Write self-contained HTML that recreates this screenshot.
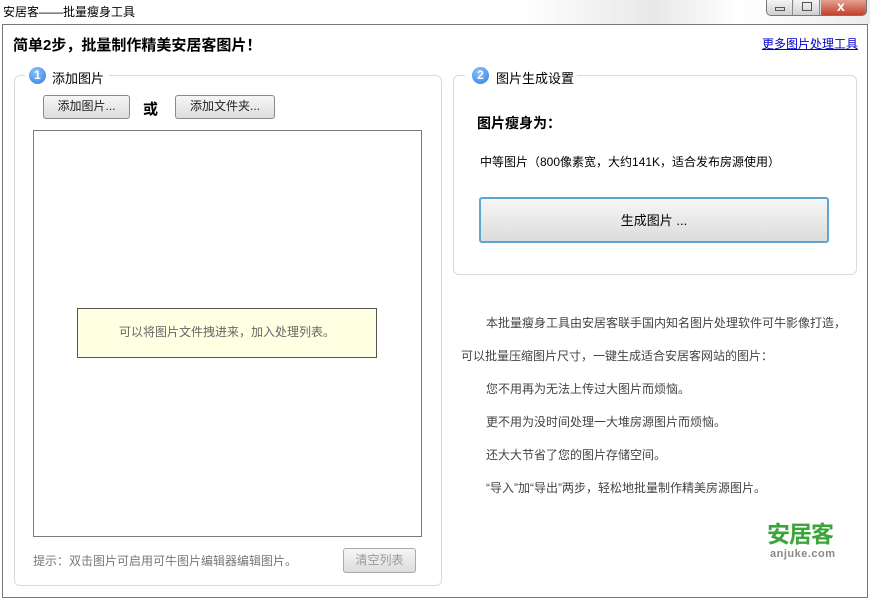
<!DOCTYPE html><html><head><meta charset="utf-8"><style>
*{margin:0;padding:0;box-sizing:border-box}
body{width:870px;height:600px;background:#fff;font-family:"Liberation Sans","Noto Sans CJK SC",sans-serif;font-size:12px;color:#000;position:relative;overflow:hidden}
.a{position:absolute;white-space:nowrap}
.btn{position:absolute;border:1px solid #8a8a8a;border-radius:3px;background:linear-gradient(#f6f6f6,#dcdcdc);text-align:center;font-size:12px;color:#222}
.grp{position:absolute;border:1px solid #dadada;border-radius:6px}
.num{position:absolute;width:17px;height:17px;border-radius:50%;background:radial-gradient(circle at 40% 30%,#8cc4ff,#2d7ce0);color:#fff;font-weight:bold;font-size:12px;text-align:center;line-height:17px}
.p{position:absolute;color:#444;font-size:12px;white-space:nowrap}
</style></head><body>
<div class="a" style="left:0;top:0;width:870px;height:24px;background:linear-gradient(90deg,#fff 60%,#e8e8e8 75%,#fff 85%,#ececec)"></div>
<div class="a" style="left:3px;top:3px;font-size:12px">安居客——批量瘦身工具</div>
<div class="a" style="left:766px;top:0;width:101px;height:16px;border:1px solid #777;border-top:none;border-radius:0 0 5px 5px;overflow:hidden;background:#ddd">
<div class="a" style="left:0;top:0;width:26px;height:15px;background:linear-gradient(#f4f4f4,#cfcfcf);border-right:1px solid #888"></div>
<div class="a" style="left:8px;top:7px;width:10px;height:4px;border:1px solid #555"></div>
<div class="a" style="left:27px;top:0;width:26px;height:15px;background:linear-gradient(#f4f4f4,#cfcfcf);border-right:1px solid #888"></div>
<div class="a" style="left:35px;top:2px;width:10px;height:9px;border:1px solid #555"></div>
<div class="a" style="left:54px;top:0;width:47px;height:15px;background:linear-gradient(#e6a090,#c2402a)"></div>
<div class="a" style="left:70px;top:-2px;color:#fff;font-weight:bold;font-size:14px">x</div>
</div>
<div class="a" style="left:2px;top:24px;width:866px;height:574px;border:1px solid #777"></div>
<div class="a" style="left:13px;top:34px;font-size:15px;font-weight:bold">简单2步，批量制作精美安居客图片！</div>
<div class="a" style="left:762px;top:35px;color:#0000cc;text-decoration:underline;font-size:12px">更多图片处理工具</div>

<div class="grp" style="left:14px;top:75px;width:428px;height:511px"></div>
<div class="a" style="left:25px;top:66px;width:84px;height:18px;background:#fff"></div>
<div class="num" style="left:29px;top:67px">1</div>
<div class="a" style="left:52px;top:68px;font-size:13px">添加图片</div>
<div class="btn" style="left:43px;top:95px;width:87px;height:24px;line-height:21px">添加图片...</div>
<div class="a" style="left:143px;top:98px;font-size:15px;font-weight:bold">或</div>
<div class="btn" style="left:175px;top:95px;width:100px;height:24px;line-height:21px">添加文件夹...</div>
<div class="a" style="left:33px;top:130px;width:389px;height:407px;border:1px solid #7a7a7a"></div>
<div class="a" style="left:77px;top:308px;width:300px;height:50px;border:1px solid #555;background:#ffffe1;color:#666;text-align:center;line-height:47px">可以将图片文件拽进来，加入处理列表。</div>
<div class="a" style="left:33px;top:552px;color:#777">提示：双击图片可启用可牛图片编辑器编辑图片。</div>
<div class="btn" style="left:343px;top:548px;width:73px;height:25px;line-height:22px;color:#999;border-color:#aaa">清空列表</div>

<div class="grp" style="left:453px;top:75px;width:404px;height:200px"></div>
<div class="a" style="left:465px;top:66px;width:112px;height:18px;background:#fff"></div>
<div class="num" style="left:472px;top:67px">2</div>
<div class="a" style="left:496px;top:68px;font-size:13px">图片生成设置</div>
<div class="a" style="left:477px;top:113px;font-size:14px;font-weight:bold">图片瘦身为：</div>
<div class="a" style="left:480px;top:153px;font-size:12px">中等图片（800像素宽，大约141K，适合发布房源使用）</div>
<div class="btn" style="left:479px;top:197px;width:350px;height:46px;line-height:44px;border:2px solid #5ea6cf;font-size:13px;color:#000">生成图片 ...</div>

<div class="p" style="left:486px;top:314px">本批量瘦身工具由安居客联手国内知名图片处理软件可牛影像打造，</div>
<div class="p" style="left:461px;top:347px">可以批量压缩图片尺寸，一键生成适合安居客网站的图片：</div>
<div class="p" style="left:486px;top:380px">您不用再为无法上传过大图片而烦恼。</div>
<div class="p" style="left:486px;top:413px">更不用为没时间处理一大堆房源图片而烦恼。</div>
<div class="p" style="left:486px;top:446px">还大大节省了您的图片存储空间。</div>
<div class="p" style="left:486px;top:479px">“导入”加“导出”两步，轻松地批量制作精美房源图片。</div>
<div class="a" style="left:767px;top:521px;font-size:23px;line-height:26px;font-weight:bold;color:#3aa63a;letter-spacing:-1px">安居客</div>
<div class="a" style="left:770px;top:548px;font-size:11px;line-height:13px;font-weight:bold;color:#888;letter-spacing:0.5px">anjuke.com</div>
</body></html>
